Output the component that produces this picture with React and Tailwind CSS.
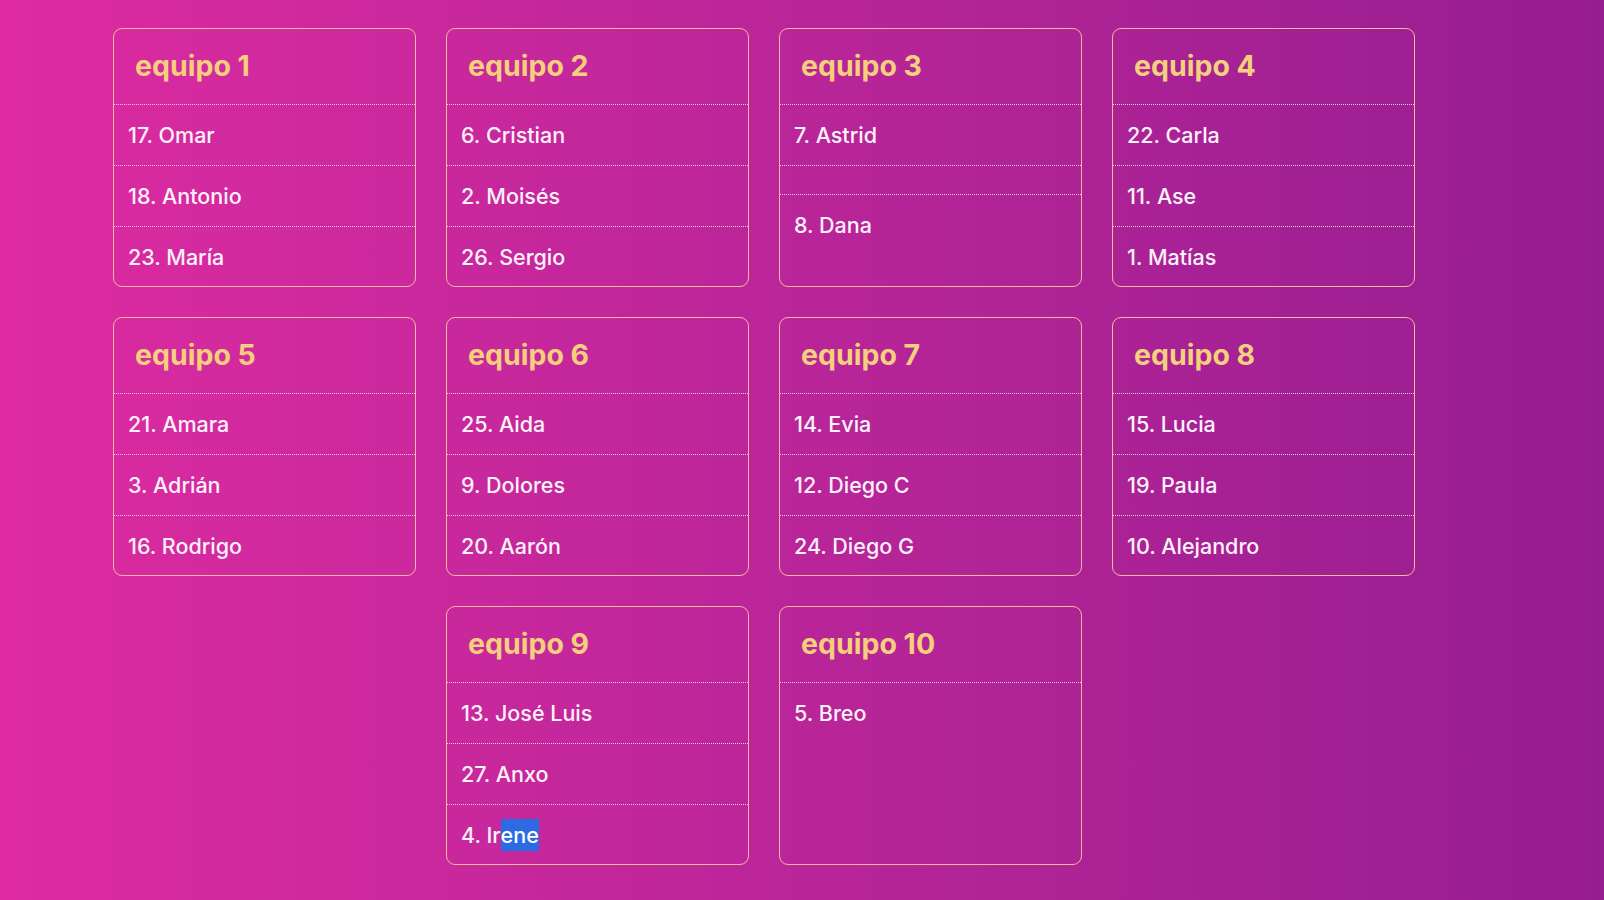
import React from 'react';

const teams = [
  { name: 'equipo 1', members: ['17. Omar', '18. Antonio', '23. María'] },
  { name: 'equipo 2', members: ['6. Cristian', '2. Moisés', '26. Sergio'] },
  { name: 'equipo 3', members: ['7. Astrid', '', '8. Dana'] },
  { name: 'equipo 4', members: ['22. Carla', '11. Ase', '1. Matías'] },
  { name: 'equipo 5', members: ['21. Amara', '3. Adrián', '16. Rodrigo'] },
  { name: 'equipo 6', members: ['25. Aida', '9. Dolores', '20. Aarón'] },
  { name: 'equipo 7', members: ['14. Evia', '12. Diego C', '24. Diego G'] },
  { name: 'equipo 8', members: ['15. Lucia', '19. Paula', '10. Alejandro'] },
  { name: 'equipo 9', members: ['13. José Luis', '27. Anxo', '4. Irene'] },
  { name: 'equipo 10', members: ['5. Breo'] },
];

function Member({ text }) {
  // la selección azul de "ene" en Irene
  if (text === '4. Irene') {
    return (
      <>
        4. Ir<span className="inline-block bg-[#2d6be4] text-white">ene</span>
      </>
    );
  }
  return text;
}

function TeamCard({ team }) {
  return (
    <div className="w-[303px] h-[259px] rounded-[9px] border border-[#f5b69d] overflow-hidden">
      {/* Header */}
      <div className="h-[76px] flex items-center px-[21px] border-b border-dotted border-[#f6c6e6]">
        <h2 className="text-[28.5px] font-bold text-[#f4cf7c]">{team.name}</h2>
      </div>

      {/* Members */}
      {team.members.map((m, i) => (
        <div
          key={i}
          className="px-[14px] py-[14px] min-h-[29px] text-[21.5px] font-medium leading-[32px] text-[#fdf1fb] border-b border-dotted border-[#f6c6e6] last:border-b-0"
        >
          <Member text={m} />
        </div>
      ))}
    </div>
  );
}

export default function App() {
  return (
    <div
      className="min-h-screen bg-gradient-to-r from-[#de2ba1] to-[#961d90] pt-[28px] pb-[34px]"
      style={{ fontFamily: 'Inter, "Noto Sans", sans-serif' }}
    >
      <div className="ml-[113px] w-[1302px] flex flex-wrap justify-center gap-x-[30px] gap-y-[30px]">
        {teams.map((t) => (
          <TeamCard key={t.name} team={t} />
        ))}
      </div>
    </div>
  );
}
